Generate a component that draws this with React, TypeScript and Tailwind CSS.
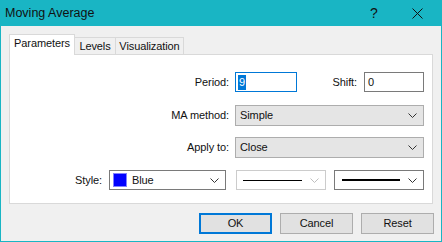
import React from "react";

const Chevron = ({ color = "#333" }: { color?: string }) => (
  <svg width="9" height="5" viewBox="0 0 9 5" className="shrink-0">
    <polyline points="0.5,0.5 4.5,4.5 8.5,0.5" fill="none" stroke={color} strokeWidth="1" />
  </svg>
);

export default function App() {
  return (
    <div
      className="w-[442px] h-[242px] bg-[#19b5c4] flex flex-col text-[11px] text-[#111] tracking-[-0.1px]"
      style={{ fontFamily: '"Liberation Sans", Arial, sans-serif' }}
    >
      {/* Title bar */}
      <div className="h-[26px] flex items-center pl-[5px] shrink-0">
        <span className="text-[12.5px] text-[#111] tracking-normal">Moving Average</span>
        <span className="ml-auto text-[14px] w-[10px] mr-[32px] text-[#111]">?</span>
        <svg width="11" height="11" viewBox="0 0 11 11" className="mr-[19px]">
          <line x1="0.5" y1="0.5" x2="10.5" y2="10.5" stroke="#111" strokeWidth="1" />
          <line x1="10.5" y1="0.5" x2="0.5" y2="10.5" stroke="#111" strokeWidth="1" />
        </svg>
      </div>
      {/* Body */}
      <div className="flex-1 mx-[1px] mb-[1px] bg-[#f0f0f0] flex flex-col">
        {/* Tabs */}
        <div className="flex items-end h-[28px] pl-[8px] pt-[7px] shrink-0">
          <div className="h-[21px] w-[66px] bg-white border border-[#d9d9d9] border-b-0 flex items-center justify-center z-10 mb-[-1px] pb-[3px]">
            Parameters
          </div>
          <div className="h-[17px] w-[41px] border border-[#d9d9d9] border-l-0 border-b-0 flex items-center justify-center">
            Levels
          </div>
          <div className="h-[17px] w-[68px] border border-[#d9d9d9] border-l-0 border-b-0 flex items-center justify-center">
            Visualization
          </div>
        </div>
        {/* Panel */}
        <div className="ml-[8px] w-[424px] h-[150px] bg-white border border-[#d9d9d9] flex flex-col shrink-0">
          {/* Row 1 */}
          <div className="flex items-center h-[20px] mt-[17px]">
            <div className="w-[219px] text-right">Period:</div>
            <div className="ml-[6px] w-[62px] h-[20px] border border-[#0078d7] flex items-center pl-[2px]">
              <span className="bg-[#0078d7] text-white px-[1px] leading-[15px]">9</span>
            </div>
            <div className="w-[60px] text-right">Shift:</div>
            <div className="ml-[7px] w-[60px] h-[20px] border border-[#7a7a7a] flex items-center pl-[3px]">0</div>
          </div>
          {/* Row 2 */}
          <div className="flex items-center h-[21px] mt-[13px]">
            <div className="w-[219px] text-right">MA method:</div>
            <div className="ml-[6px] w-[189px] h-[21px] bg-[#e5e5e5] border border-[#adadad] flex items-center pl-[4px] pr-[6px]">
              <span className="flex-1">Simple</span>
              <Chevron />
            </div>
          </div>
          {/* Row 3 */}
          <div className="flex items-center h-[21px] mt-[11px]">
            <div className="w-[219px] text-right">Apply to:</div>
            <div className="ml-[6px] w-[189px] h-[21px] bg-[#e5e5e5] border border-[#adadad] flex items-center pl-[4px] pr-[6px]">
              <span className="flex-1">Close</span>
              <Chevron />
            </div>
          </div>
          {/* Row 4 */}
          <div className="flex items-center h-[20px] mt-[12px]">
            <div className="w-[92px] text-right">Style:</div>
            <div className="ml-[7px] w-[117px] h-[20px] bg-white border border-[#7a7a7a] flex items-center pl-[3px] pr-[6px]">
              <div className="w-[14px] h-[14px] bg-[#0000ff] border border-[#8080ff]" />
              <span className="flex-1 ml-[5px]">Blue</span>
              <Chevron />
            </div>
            <div className="ml-[10px] w-[90px] h-[20px] bg-white border border-[#cccccc] flex items-center pl-[6px] pr-[6px]">
              <div className="w-[59px] h-[1px] bg-black" />
              <div className="flex-1" />
              <Chevron color="#bfbfbf" />
            </div>
            <div className="ml-[8px] w-[90px] h-[20px] bg-white border border-[#7a7a7a] flex items-center pl-[7px] pr-[6px]">
              <div className="w-[58px] h-[2px] bg-black" />
              <div className="flex-1" />
              <Chevron />
            </div>
          </div>
        </div>
        {/* Buttons */}
        <div className="flex mt-[9px] ml-[198px] gap-[8px]">
          <div className="w-[73px] h-[21px] bg-[#e1e1e1] border-2 border-[#0078d7] flex items-center justify-center">OK</div>
          <div className="w-[73px] h-[21px] bg-[#e1e1e1] border border-[#adadad] flex items-center justify-center">Cancel</div>
          <div className="w-[73px] h-[21px] bg-[#e1e1e1] border border-[#adadad] flex items-center justify-center">Reset</div>
        </div>
      </div>
    </div>
  );
}
